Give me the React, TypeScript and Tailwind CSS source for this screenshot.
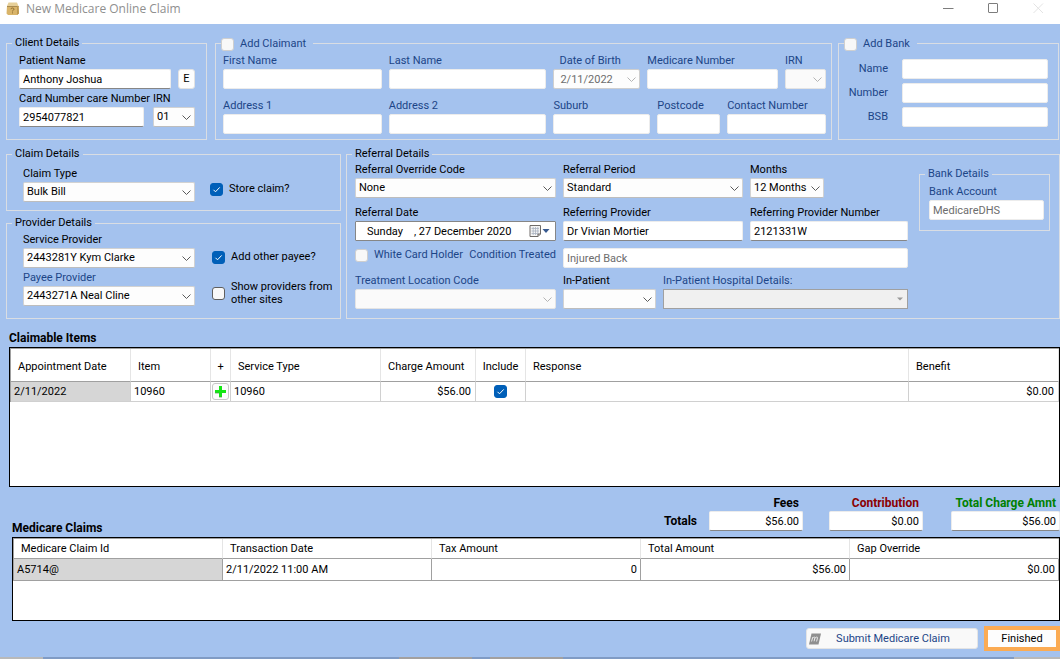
import { useId, type ReactNode } from "react";
import clsx from "clsx";

const inputBase = "block h-5 w-full min-w-0 rounded-[2px] border border-[#ececec] bg-white px-[3px] leading-[18px] outline-none";

function Chevron({ muted }: { muted?: boolean }) {
    return (
        <svg className={clsx("pointer-events-none absolute right-1 top-[6px]", muted ? "text-[#b4b4b4]" : "text-[#5a5a5a]")} width="9" height="9" viewBox="0 0 9 9" fill="none" stroke="currentColor">
            <path d="M0.5 2.5 L4.5 6.5 L8.5 2.5" />
        </svg>
    );
}

type FieldProps = {
    label: string;
    value?: string;
    disabled?: boolean;
    muted?: boolean;
    className?: string;
};

function Label({ id, muted, children }: { id: string; muted?: boolean; children: ReactNode }) {
    return (
        <label htmlFor={id} className={clsx("block h-[14px] whitespace-nowrap leading-[12px]", muted && "text-[#1c4587]")}>{children}</label>
    );
}

function TextField({ label, value = "", disabled, muted, className }: FieldProps) {
    const id = useId();
    return (
        <div className={clsx("min-w-0", className)}>
            <Label id={id} muted={muted ?? disabled}>{label}</Label>
            <input id={id} type="text" defaultValue={value} disabled={disabled} className={clsx(inputBase, disabled ? "text-[#6d6d6d]" : "border-b-[#868686]")} />
        </div>
    );
}

function SelectField({ label, value = "", disabled, muted, className }: FieldProps) {
    const id = useId();
    return (
        <div className={clsx("min-w-0", className)}>
            <Label id={id} muted={muted ?? disabled}>{label}</Label>
            <div className="relative">
                <select id={id} defaultValue={value} disabled={disabled} className={clsx("block h-5 w-full appearance-none rounded-[2px] border px-[3px] leading-[18px] opacity-100 outline-none", disabled ? "border-[#e4e4e4] bg-[#fafafa]" : "border-[#d2d2d2] border-b-[#bdbdbd] bg-[#fdfdfd]")}>
                    <option value={value}>{value}</option>
                </select>
                <Chevron muted={disabled} />
            </div>
        </div>
    );
}

function Tick({ checked, faded, label }: { checked?: boolean; faded?: boolean; label?: string }) {
    return (
        <span className="relative block size-[13px] shrink-0">
            <input type="checkbox" aria-label={label} defaultChecked={checked} className={clsx("peer block size-[13px] appearance-none rounded-[3px] border bg-[#f8f8f8] checked:border-[#005fb8] checked:bg-[#005fb8]", faded ? "border-[#cfcfcf]" : "border-[#5f5f5f]")} />
            <svg className="pointer-events-none absolute inset-0 hidden text-white peer-checked:block" width="13" height="13" viewBox="0 0 13 13" fill="none" stroke="currentColor">
                <path d="M3.5 6.8 L5.5 8.8 L9.7 4.4" />
            </svg>
        </span>
    );
}

function CheckLabel({ children, checked, faded, className }: { children: ReactNode; checked?: boolean; faded?: boolean; className?: string }) {
    return (
        <label className={clsx("flex items-center gap-[6px] whitespace-nowrap", faded && "text-[#1c4587]", className)}>
            <Tick checked={checked} faded={faded} />
            <span>{children}</span>
        </label>
    );
}

function Group({ title, children, className }: { title: ReactNode; children: ReactNode; className?: string }) {
    return (
        <fieldset className={clsx("min-w-0 border border-[#d9dde3] px-[5px]", className)}>
            <legend className="h-[14px] px-[3px]">{title}</legend>
            {children}
        </fieldset>
    );
}

function TitleBar() {
    return (
        <header className="flex h-6 shrink-0 items-start bg-white pl-[6px] pr-4">
            <svg className="mt-[2px]" width="14" height="14" viewBox="0 0 14 14">
                <path d="M2.5 0.5 H11 L12.5 4 H1 Z" fill="#e6cf98" />
                <path d="M1 4 H12.5 L13 11.5 L11 13 H2 L0.5 11.5 Z" fill="#d9b469" />
                <path d="M1 4 H12.5 V5 H1 Z" fill="#a98a50" />
                <path d="M11 4 L12.5 4 L13 11.5 L11 13 Z" fill="#bd9850" />
                <path d="M5 7.2 Q5 6 6.4 6 Q8 6 8 7.2 Q8 8 6.5 8.8 V9.4 M6.5 10.4 V11.4" fill="none" stroke="#8f6f32" />
            </svg>
            <h1 className="ml-[6px] font-['Open_Sans',sans-serif] text-[12px] leading-[18px] text-[#8f8f8f]">New Medicare Online Claim</h1>
            <div className="ml-auto flex gap-[34px] text-[#7d7d7d]">
                <button aria-label="Minimise" className="h-4">
                    <svg width="11" height="16" viewBox="0 0 11 16" stroke="currentColor"><path d="M0 8.5 H10.5" /></svg>
                </button>
                <button aria-label="Maximise" className="h-4">
                    <svg width="11" height="16" viewBox="0 0 11 16" stroke="currentColor" fill="none"><rect x="0.5" y="3.5" width="9" height="9" rx="0.5" /></svg>
                </button>
                <button aria-label="Close" className="h-4 text-[#e3e3e3]">
                    <svg width="11" height="16" viewBox="0 0 11 16" stroke="currentColor"><path d="M0.5 3.5 L10 13 M10 3.5 L0.5 13" /></svg>
                </button>
            </div>
        </header>
    );
}

function ClientDetails() {
    return (
        <Group title="Client Details" className="w-[201px] shrink-0">
            <div className="flex flex-col gap-1 pb-3 pl-[7px] pr-[6px] pt-[5px]">
                <div className="flex items-end gap-[7px]">
                    <TextField label="Patient Name" value="Anthony Joshua" className="grow" />
                    <button className="h-5 w-[17px] shrink-0 rounded-[3px] border border-[#e2e2e2] bg-[#fdfdfd] leading-[18px]">E</button>
                </div>
                <div className="flex items-end gap-[9px]">
                    <TextField label="Card Number care Number" value="2954077821" className="grow" />
                    <SelectField label="IRN" value="01" className="w-[42px] shrink-0" />
                </div>
            </div>
        </Group>
    );
}

function ClaimantDetails() {
    return (
        <Group title={<CheckLabel faded className="-ml-[3px] pr-1 pt-[1px]">Add Claimant</CheckLabel>} className="grow">
            <div className="flex flex-col gap-[11px] pl-[2px] pt-[5px]">
                <div className="grid grid-cols-[159fr_158fr_87fr_131fr_41fr] gap-[7px]">
                    <TextField label="First Name" disabled />
                    <TextField label="Last Name" disabled />
                    <BirthDate />
                    <TextField label="Medicare Number" disabled />
                    <SelectField label="IRN" disabled />
                </div>
                <div className="grid grid-cols-[159fr_158fr_97fr_63fr_99fr] gap-[7px]">
                    <TextField label="Address 1" disabled />
                    <TextField label="Address 2" disabled />
                    <TextField label="Suburb" disabled />
                    <TextField label="Postcode" disabled />
                    <TextField label="Contact Number" disabled />
                </div>
            </div>
        </Group>
    );
}

function BirthDate() {
    const id = useId();
    return (
        <div className="min-w-0">
            <div className="pl-[6px]">
                <Label id={id} muted>Date of Birth</Label>
            </div>
            <div className="relative">
                <input id={id} type="text" disabled defaultValue="2/11/2022" className="block h-5 w-full rounded-[2px] border border-[#cfcfcf] bg-[#fdfdfd] px-[6px] leading-[18px] text-[#6d6d6d]" />
                <Chevron muted />
            </div>
        </div>
    );
}

function BankRow({ label }: { label: string }) {
    const id = useId();
    return (
        <div className="flex items-center gap-[14px]">
            <label htmlFor={id} className="w-[43px] shrink-0 text-right">{label}</label>
            <input id={id} type="text" disabled className={inputBase} />
        </div>
    );
}

function BankEntry() {
    return (
        <Group title={<CheckLabel faded className="-ml-[3px] pr-1 pt-[1px]">Add Bank</CheckLabel>} className="w-[221px] shrink-0 text-[#1c4587]">
            <div className="flex flex-col gap-1 pl-[1px] pr-[5px] pt-[9px]">
                <BankRow label="Name" />
                <BankRow label="Number" />
                <BankRow label="BSB" />
            </div>
        </Group>
    );
}

function ClaimDetails() {
    return (
        <Group title="Claim Details">
            <div className="flex items-center gap-[15px] pb-2 pl-[11px] pt-[7px]">
                <SelectField label="Claim Type" value="Bulk Bill" className="w-[172px]" />
                <CheckLabel checked className="mt-2">Store claim?</CheckLabel>
            </div>
        </Group>
    );
}

function ProviderDetails() {
    return (
        <Group title="Provider Details">
            <div className="grid grid-cols-[172px_1fr] gap-x-[17px] gap-y-1 pb-3 pl-[11px] pt-1">
                <SelectField label="Service Provider" value="2443281Y Kym Clarke" />
                <CheckLabel checked className="mt-3">Add other payee?</CheckLabel>
                <SelectField label="Payee Provider" value="2443271A Neal Cline" muted />
                <CheckLabel className="mt-2 leading-[13px]">Show providers from<br />other sites</CheckLabel>
            </div>
        </Group>
    );
}

function ReferralDate() {
    const id = useId();
    return (
        <div className="min-w-0">
            <Label id={id}>Referral Date</Label>
            <div className="relative">
                <input id={id} type="text" defaultValue={"Sunday\u00a0\u00a0\u00a0\u00a0, 27 December 2020"} className="block h-5 w-full rounded-[1px] border border-[#868686] bg-white pl-[11px] leading-[18px] outline-none" />
                <svg className="pointer-events-none absolute right-[5px] top-[3px]" width="22" height="14" viewBox="0 0 22 14">
                    <path d="M1 1.5 H11.5 V10 L9 12.5 H1 Z" fill="#f4f4f4" stroke="#6e6b68" />
                    <path d="M2.5 4.5 H10 M2.5 7 H10 M2.5 9.5 H9 M4.2 3 V11 M6.5 3 V11 M8.8 3 V11" stroke="#a9b2c0" strokeWidth="0.8" />
                    <path d="M9 12.5 V10 H11.5" fill="#c9c5bf" stroke="#6e6b68" />
                    <path d="M13.5 5 H20.5 L17 9 Z" fill="#37598f" />
                </svg>
            </div>
        </div>
    );
}

function HospitalDetails() {
    const id = useId();
    return (
        <div className="min-w-0">
            <Label id={id} muted>In-Patient Hospital Details:</Label>
            <div className="relative">
                <select id={id} disabled className="block h-5 w-full appearance-none border border-[#a0a0a0] bg-[#f0f0f0] opacity-100" />
                <svg className="pointer-events-none absolute right-[5px] top-2" width="6" height="4" viewBox="0 0 6 4"><path d="M0 0.5 H6 L3 3.5 Z" fill="#9a9a9a" /></svg>
            </div>
        </div>
    );
}

function ReferralDetails() {
    const conditionId = useId();
    return (
        <Group title="Referral Details" className="grow">
            <div className="flex items-start gap-[11px] pb-[9px] pl-[3px] pr-1 pt-[3px]">
                <div className="flex min-w-0 grow flex-col gap-[7px]">
                    <div className="grid grid-cols-[201fr_180fr_158fr] gap-x-[7px] gap-y-[9px]">
                        <SelectField label="Referral Override Code" value="None" />
                        <SelectField label="Referral Period" value="Standard" />
                        <SelectField label="Months" value="12 Months" className="w-[74px]" />
                        <ReferralDate />
                        <TextField label="Referring Provider" value="Dr Vivian Mortier" />
                        <TextField label="Referring Provider Number" value="2121331W" />
                    </div>
                    <div className="grid grid-cols-[201fr_345fr] gap-[7px]">
                        <div className="flex items-start justify-between text-[#1c4587]">
                            <CheckLabel faded>White Card Holder</CheckLabel>
                            <label htmlFor={conditionId}>Condition Treated</label>
                        </div>
                        <input id={conditionId} type="text" disabled defaultValue="Injured Back" className={clsx(inputBase, "text-[#6d6d6d]")} />
                    </div>
                    <div className="grid grid-cols-[201fr_93fr_245fr] gap-[7px]">
                        <SelectField label="Treatment Location Code" disabled />
                        <SelectField label="In-Patient" />
                        <HospitalDetails />
                    </div>
                </div>
                <Group title="Bank Details" className="mt-[3px] w-[131px] shrink-0 text-[#1c4587]">
                    <TextField label="Bank Account" value="MedicareDHS" disabled className="pb-[10px] pl-[4px] pt-[5px]" />
                </Group>
            </div>
        </Group>
    );
}

const claimHead = "border-b border-r border-b-[#a0a0a0] border-r-[#e5e5e5] px-[7px] pt-[3px] text-left font-normal";
const claimHeadCentre = "border-b border-r border-b-[#a0a0a0] border-r-[#e5e5e5] pt-[3px] text-center font-normal";
const claimCell = "h-5 border-b border-r border-[#d0d0d0] pl-[3px] pr-1";

function ClaimableItems() {
    return (
        <section className="flex grow flex-col pl-[9px] pt-3">
            <h2 className="mb-[2px] text-[12px] font-bold">Claimable Items</h2>
            <div className="min-h-[138px] grow border border-black bg-white">
                <table className="w-full table-fixed border-separate border-spacing-0 border-l border-t border-[#a0a0a0]">
                    <colgroup>
                        <col className="w-[120px]" />
                        <col className="w-20" />
                        <col className="w-5" />
                        <col className="w-[150px]" />
                        <col className="w-[95px]" />
                        <col className="w-[50px]" />
                        <col />
                        <col className="w-[150px]" />
                    </colgroup>
                    <thead>
                        <tr className="h-[33px]">
                            <th className={claimHead}>Appointment Date</th>
                            <th className={claimHead}>Item</th>
                            <th className={claimHeadCentre}>+</th>
                            <th className={claimHead}>Service Type</th>
                            <th className={claimHead}>Charge Amount</th>
                            <th className={claimHeadCentre}>Include</th>
                            <th className={claimHead}>Response</th>
                            <th className={claimHead}>Benefit</th>
                        </tr>
                    </thead>
                    <tbody>
                        <tr>
                            <td className={clsx(claimCell, "bg-[#d6d6d6]")}>2/11/2022</td>
                            <td className={claimCell}>10960</td>
                            <td className="border-b border-r border-[#d0d0d0]">
                                <button aria-label="Add item" className="mx-auto flex size-[17px] items-center justify-center rounded-[3px] border border-[#c8c8c8] bg-[#fdfdfd]">
                                    <svg className="shrink-0" width="13" height="13" viewBox="0 0 13 13">
                                        <path d="M5 1 H8 V5 H12 V8 H8 V12 H5 V8 H1 V5 H5 Z" fill="#14e614" />
                                        <path d="M5 8 H1 M5 12 H8" stroke="#4c9a4c" strokeWidth="0.7" />
                                    </svg>
                                </button>
                            </td>
                            <td className={claimCell}>10960</td>
                            <td className={clsx(claimCell, "text-right")}>$56.00</td>
                            <td className="border-b border-r border-[#d0d0d0]">
                                <div className="flex justify-center"><Tick checked label="Include" /></div>
                            </td>
                            <td className={claimCell}></td>
                            <td className={clsx(claimCell, "text-right")}>$0.00</td>
                        </tr>
                    </tbody>
                </table>
            </div>
        </section>
    );
}

function Total({ label, value, className, color }: { label: string; value: string; className: string; color?: string }) {
    const id = useId();
    return (
        <div className={clsx("shrink-0", className)}>
            <label htmlFor={id} className={clsx("mb-[1px] block h-[14px] whitespace-nowrap pr-1 text-right text-[12px] font-bold", color)}>{label}</label>
            <input id={id} type="text" readOnly value={value} className={clsx(inputBase, "border-b-[#868686] text-right")} />
        </div>
    );
}

const medicareHead = "border-b border-r border-b-[#a0a0a0] border-r-[#e5e5e5] px-[7px] text-left font-normal";
const medicareCell = "h-[22px] border-b border-r border-[#a0a0a0] px-[3px]";

function MedicareClaims() {
    return (
        <section className="pl-3 pt-[9px]">
            <div className="mb-[6px] flex items-end">
                <h2 className="-mb-1 text-[12px] font-bold">Medicare Claims</h2>
                <span className="mb-[3px] ml-auto mr-3 text-[12px] font-bold">Totals</span>
                <Total label="Fees" value="$56.00" className="mr-[26px] w-[94px]" />
                <Total label="Contribution" value="$0.00" className="mr-7 w-[94px]" color="text-[#8b0000]" />
                <Total label="Total Charge Amnt" value="$56.00" className="w-[109px]" color="text-[#008000]" />
            </div>
            <div className="min-h-[84px] border border-black bg-white">
                <table className="w-full table-fixed border-separate border-spacing-0 border-l border-t border-[#a0a0a0]">
                    <thead>
                        <tr className="h-5">
                            <th className={medicareHead}>Medicare Claim Id</th>
                            <th className={medicareHead}>Transaction Date</th>
                            <th className={medicareHead}>Tax Amount</th>
                            <th className={medicareHead}>Total Amount</th>
                            <th className={medicareHead}>Gap Override</th>
                        </tr>
                    </thead>
                    <tbody>
                        <tr>
                            <td className={clsx(medicareCell, "bg-[#d6d6d6]")}>A5714@</td>
                            <td className={medicareCell}>2/11/2022 11:00 AM</td>
                            <td className={clsx(medicareCell, "text-right")}>0</td>
                            <td className={clsx(medicareCell, "text-right")}>$56.00</td>
                            <td className={clsx(medicareCell, "text-right")}>$0.00</td>
                        </tr>
                    </tbody>
                </table>
            </div>
        </section>
    );
}

export default function App() {
    return (
        <div className="flex min-h-screen flex-col bg-[#a4c2ee] font-[Roboto,sans-serif] text-[11px] leading-[14px] text-black">
            <TitleBar />
            <main className="flex grow flex-col">
                <div className="flex gap-2 pl-[6px] pr-[1px] pt-3">
                    <ClientDetails />
                    <div className="flex grow gap-[6px]">
                        <ClaimantDetails />
                        <BankEntry />
                    </div>
                </div>
                <div className="mt-[7px] flex gap-[5px] pl-[6px]">
                    <div className="flex w-[335px] shrink-0 flex-col gap-[5px]">
                        <ClaimDetails />
                        <ProviderDetails />
                    </div>
                    <ReferralDetails />
                </div>
                <ClaimableItems />
                <MedicareClaims />
            </main>
            <div className="flex items-center justify-end gap-[6px] pb-[6px] pt-[5px]">
                <button disabled className="flex h-[21px] w-[172px] items-center rounded-[3px] border border-[#e4e4e4] bg-[#f9f9f9] pl-[2px] text-[#1c4587]">
                    <svg width="12" height="12" viewBox="0 0 12 12">
                        <path d="M2.5 0.5 H12 L9.5 11.5 H0 Z" fill="#8f8f8f" />
                        <path d="M2.6 8.5 L3.7 4.2 M3.4 5.3 Q5.8 3 5.9 4.8 L5.1 8.3 M5.8 5.3 Q8.4 3 8.5 4.8 L7.6 8.5" fill="none" stroke="#e9e9e9" strokeWidth="1" />
                    </svg>
                    <span className="grow pr-3 text-center">Submit Medicare Claim</span>
                </button>
                <button className="h-[25px] w-[76px] border-4 border-[#fbab53] bg-[#fdfdfd]">Finished</button>
            </div>
            <div className="flex h-[2px] shrink-0 bg-[#809bc4]">
                <div className="w-[43px] bg-[#b9b9b9]" />
                <div className="ml-[356px] w-[73px] bg-[#a3a09f]" />
                <div className="ml-[18px] w-[73px] bg-[#a3a09f]" />
                <div className="ml-auto w-[46px] bg-[#b9b9b9]" />
            </div>
        </div>
    );
}
